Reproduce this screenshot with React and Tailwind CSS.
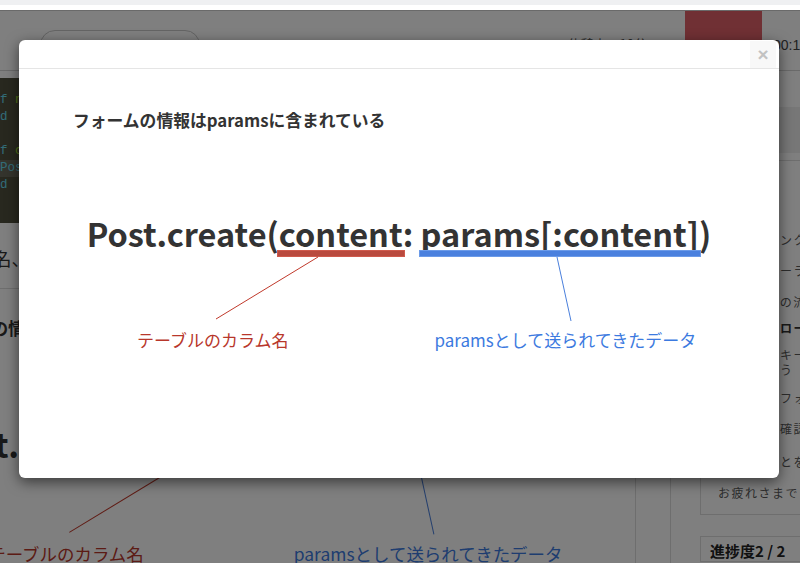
import React from 'react';

const sans = "font-['Noto_Sans_CJK_JP','Noto_Sans',sans-serif]";

function Mark({ children, bar }) {
  return (
    <span className="relative inline-block">
      {children}
      <span className={bar} />
    </span>
  );
}

// the lesson slide: shown in the modal and, slightly larger, behind it
function Slide() {
  return (
    <div className="relative w-[760px] h-[340px] bg-white text-[#333]">
      <h3 className="pl-[54px] pt-[26px] text-[16.8px] leading-[24px] font-bold">
        フォームの情報はparamsに含まれている
      </h3>
      <p className="mt-[77px] text-center text-[32.5px] leading-[48px] font-semibold whitespace-nowrap">
        Post.create(
        <Mark bar="absolute -left-[2px] -right-[2px] top-[41px] h-[7px] bg-[#b94a3e] border border-[#cf5a4c]">content</Mark>
        : <Mark bar="absolute -left-[2px] -right-[2px] top-[41px] h-[7px] bg-[#4a80de] border border-[#6b9ae8]">params[:content]</Mark>)
      </p>
      <div className="mt-[71px] flex text-[17px] leading-[24px] whitespace-nowrap">
        <span className="ml-[118px] text-[#b8372b]">テーブルのカラム名</span>
        <span className="ml-[146px] text-[#3c7ae0]">paramsとして送られてきたデータ</span>
      </div>
      <svg className="absolute left-0 top-0" width="760" height="340">
        <line x1="299" y1="175" x2="197" y2="237" stroke="#c0392b" strokeWidth="1" />
        <line x1="538" y1="175" x2="552" y2="239" stroke="#4a7fdc" strokeWidth="1" />
      </svg>
    </div>
  );
}

const code = [
  { text: [['def ', 'text-[#66d9ef]'], ['new', 'text-[#a6e22e]']] },
  { text: [['end', 'text-[#66d9ef]']] },
  { text: [] },
  { text: [['def ', 'text-[#66d9ef]'], ['create', 'text-[#a6e22e]']] },
  { text: [['  Post', 'text-[#66d9ef]'], ['.create(content: params[:content])', 'text-[#f8f8f2]']], hl: true },
  { text: [['end', 'text-[#66d9ef]']] },
];

const toc = [
  { t: '外部へリンク', c: '' },
  { t: 'コントローラ', c: 'mt-[16px]' },
  { t: 'フォームの流れ', c: 'mt-[16px]' },
  { t: 'データのロード', c: 'mt-[11px] font-bold text-[#333]' },
  { t: 'ハッシュキーの\n値を使おう', c: 'mt-[12px] whitespace-pre-line' },
  { t: '入力したフォーム', c: 'mt-[13px]' },
  { t: 'ログ出力確認', c: 'mt-[16px]' },
  { t: '学んだことを確認', c: 'mt-[18px]' },
];

export default function App() {
  return (
    <div className={`w-[800px] h-[563px] overflow-hidden bg-white ${sans}`}>
      <div className="h-[5px] bg-[#eff0f2]" />
      <div className="h-[5px] bg-white" />

      <div className="relative h-[553px] overflow-hidden">
        {/* header */}
        <div className="flex h-[61px] border-t border-b border-[#d4d4d4] bg-white">
          <div className="ml-[40px] mt-[19px] flex h-[30px] w-[160px] items-center rounded-full border border-[#c8c8c8] pl-[12px]">
            <span className="h-[8px] w-[8px] rounded-full border-2 border-[#555]" />
          </div>
          <div className="flex-1" />
          <span className="mt-[25px] text-[13px] leading-[16px] text-[#555]">休憩中で10分</span>
          <div className="ml-[38px] w-[77px] bg-[#e06068]" />
          <span className="ml-[11px] mt-[26px] w-[27px] overflow-hidden whitespace-nowrap font-['Liberation_Sans',sans-serif] text-[14px] leading-[16px] text-[#444]">00:10</span>
        </div>

        <div className="flex">
          {/* main column */}
          <div className="w-[635px] shrink-0 overflow-hidden">
            <div className="-ml-[133px] w-[780px]">
              <div className="mt-[7px] h-[145px] bg-[#50503e] pt-[14px] font-['Liberation_Mono',monospace] text-[12.5px] leading-[17px]">
                {code.map((l, i) => (
                  <div key={i} className={`h-[17px] whitespace-pre pl-[118px] ${l.hl ? 'bg-[#68685a]' : ''}`}>
                    {l.text.map(([s, c], j) => (
                      <span key={j} className={c}>{s}</span>
                    ))}
                  </div>
                ))}
              </div>
              <p className="mt-[22px] pl-[1px] text-[18px] leading-[26px] text-[#333] whitespace-nowrap">
                保存するカラム名、保存する値を指定します
              </p>
              <div className="mt-[17px] border-t border-[#ddd]" />
              <div className="origin-top-left scale-[1.027]">
                <Slide />
              </div>
            </div>
          </div>

          <div className="w-[36px] shrink-0 h-[492px] border-l border-r border-[#dcdcdc]" />

          {/* sidebar */}
          <div className="flex-1 pl-[29px] text-[12px] leading-[15px] tracking-[1.5px] text-[#5a5a5a] whitespace-nowrap">
            <div className="mt-[36px] h-[46px] bg-[#eeeeee]" />
            <div className="mt-[7px] w-[200px] border border-[#dddddd] bg-white pt-[71px] pb-[14px]">
              <div className="pl-[25px]">
                {toc.map((it, i) => (
                  <div key={i} className={it.c}>{it.t}</div>
                ))}
              </div>
              <div className="mt-[16px] pl-[17px]">お疲れさまでした！</div>
            </div>
            <div className="mt-[21px] w-[200px] border border-[#dddddd] bg-white pt-[4px] pl-[9px] text-[15px] leading-[20px] tracking-normal font-bold text-[#222]">
              進捗度2 / 2
            </div>
          </div>
        </div>

        {/* backdrop */}
        <div className="absolute inset-0 bg-black/50" />

        {/* modal */}
        <div className="absolute left-[19px] top-[30px] h-[438px] w-[760px] overflow-hidden rounded-[6px] bg-white shadow-[0_4px_14px_rgba(0,0,0,0.55)]">
          <div className="flex h-[29px] justify-end border-b border-[#e5e5e5]">
            <button className="mr-[3px] mt-[1px] flex h-[27px] w-[26px] items-center justify-center bg-[#f8f8f8] font-['Liberation_Sans',sans-serif] text-[19px] font-bold leading-none text-[#c2c2c2]">
              ×
            </button>
          </div>
          <div className="pt-[13px]">
            <Slide />
          </div>
        </div>
      </div>
    </div>
  );
}
